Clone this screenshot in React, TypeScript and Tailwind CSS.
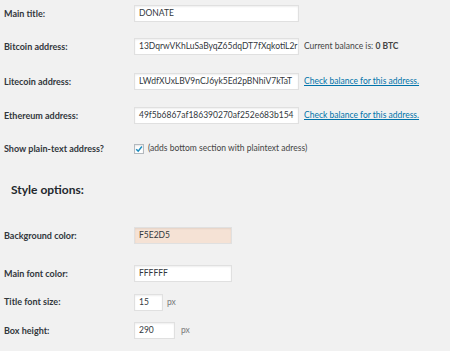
import React from "react";

const font = { fontFamily: 'Lato, "Open Sans", sans-serif' };

function Label({ children }: { children: React.ReactNode }) {
  return (
    <div className="w-[130px] shrink-0 text-[9px] font-bold text-[#32373c]">{children}</div>
  );
}

function Input({ value, w, bg = "bg-white" }: { value: string; w: string; bg?: string }) {
  return (
    <div
      className={`${w} ${bg} h-[17px] border border-[#e0e0e0] shadow-[inset_0_1px_2px_rgba(0,0,0,0.07)] flex items-center px-[4px] text-[8.5px] text-[#32373c] overflow-hidden whitespace-nowrap`}
    >
      {value}
    </div>
  );
}

export default function App() {
  return (
    <div className="w-[450px] h-[351px] bg-[#f1f1f1] overflow-hidden pl-[4px] pt-[5px]" style={font}>
      <div className="flex items-center h-[17px]">
        <Label>Main title:</Label>
        <Input value="DONATE" w="w-[165px]" />
      </div>
      <div className="flex items-center h-[17px] mt-[16px]">
        <Label>Bitcoin address:</Label>
        <Input value="13DqrwVKhLuSaByqZ65dqDT7fXqkotiL2r" w="w-[165px]" />
        <span className="ml-[5px] text-[8.5px] text-[#444]">
          Current balance is: <b className="font-bold">0 BTC</b>
        </span>
      </div>
      <div className="flex items-center h-[17px] mt-[18px]">
        <Label>Litecoin address:</Label>
        <Input value="LWdfXUxLBV9nCJ6yk5Ed2pBNhiV7kTaT" w="w-[165px]" />
        <span className="ml-[5px] text-[8.5px] text-[#0073aa] underline">Check balance for this address.</span>
      </div>
      <div className="flex items-center h-[17px] mt-[17px]">
        <Label>Ethereum address:</Label>
        <Input value="49f5b6867af186390270af252e683b154" w="w-[165px]" />
        <span className="ml-[5px] text-[8.5px] text-[#0073aa] underline">Check balance for this address.</span>
      </div>
      <div className="flex items-center h-[17px] mt-[16px]">
        <Label>Show plain-text address?</Label>
        <div className="w-[10px] h-[10px] bg-white border border-[#b4b9be] shadow-[inset_0_1px_2px_rgba(0,0,0,0.1)] flex items-center justify-center">
          <svg width="8" height="8" viewBox="0 0 10 10">
            <path d="M1.5 5.2 L4 7.6 L8.6 1.8" fill="none" stroke="#1e8cbe" strokeWidth="1.8" />
          </svg>
        </div>
        <span className="ml-[4px] text-[8.5px] text-[#444]">(adds bottom section with plaintext adress)</span>
      </div>
      <div className="h-[18px] mt-[24px] ml-[7px] flex items-center text-[12px] font-bold text-[#23282d]">
        Style options:
      </div>
      <div className="flex items-center h-[17px] mt-[28px]">
        <Label>Background color:</Label>
        <Input value="F5E2D5" w="w-[98px]" bg="bg-[#f5e2d5]" />
      </div>
      <div className="flex items-center h-[17px] mt-[21px]">
        <Label>Main font color:</Label>
        <Input value="FFFFFF" w="w-[98px]" />
      </div>
      <div className="flex items-center h-[16px] mt-[12px]">
        <Label>Title font size:</Label>
        <Input value="15" w="w-[29px]" />
        <span className="ml-[4px] text-[8.5px] text-[#777]">px</span>
      </div>
      <div className="flex items-center h-[17px] mt-[12px]">
        <Label>Box height:</Label>
        <Input value="290" w="w-[41px]" />
        <span className="ml-[6px] text-[8.5px] text-[#777]">px</span>
      </div>
    </div>
  );
}
